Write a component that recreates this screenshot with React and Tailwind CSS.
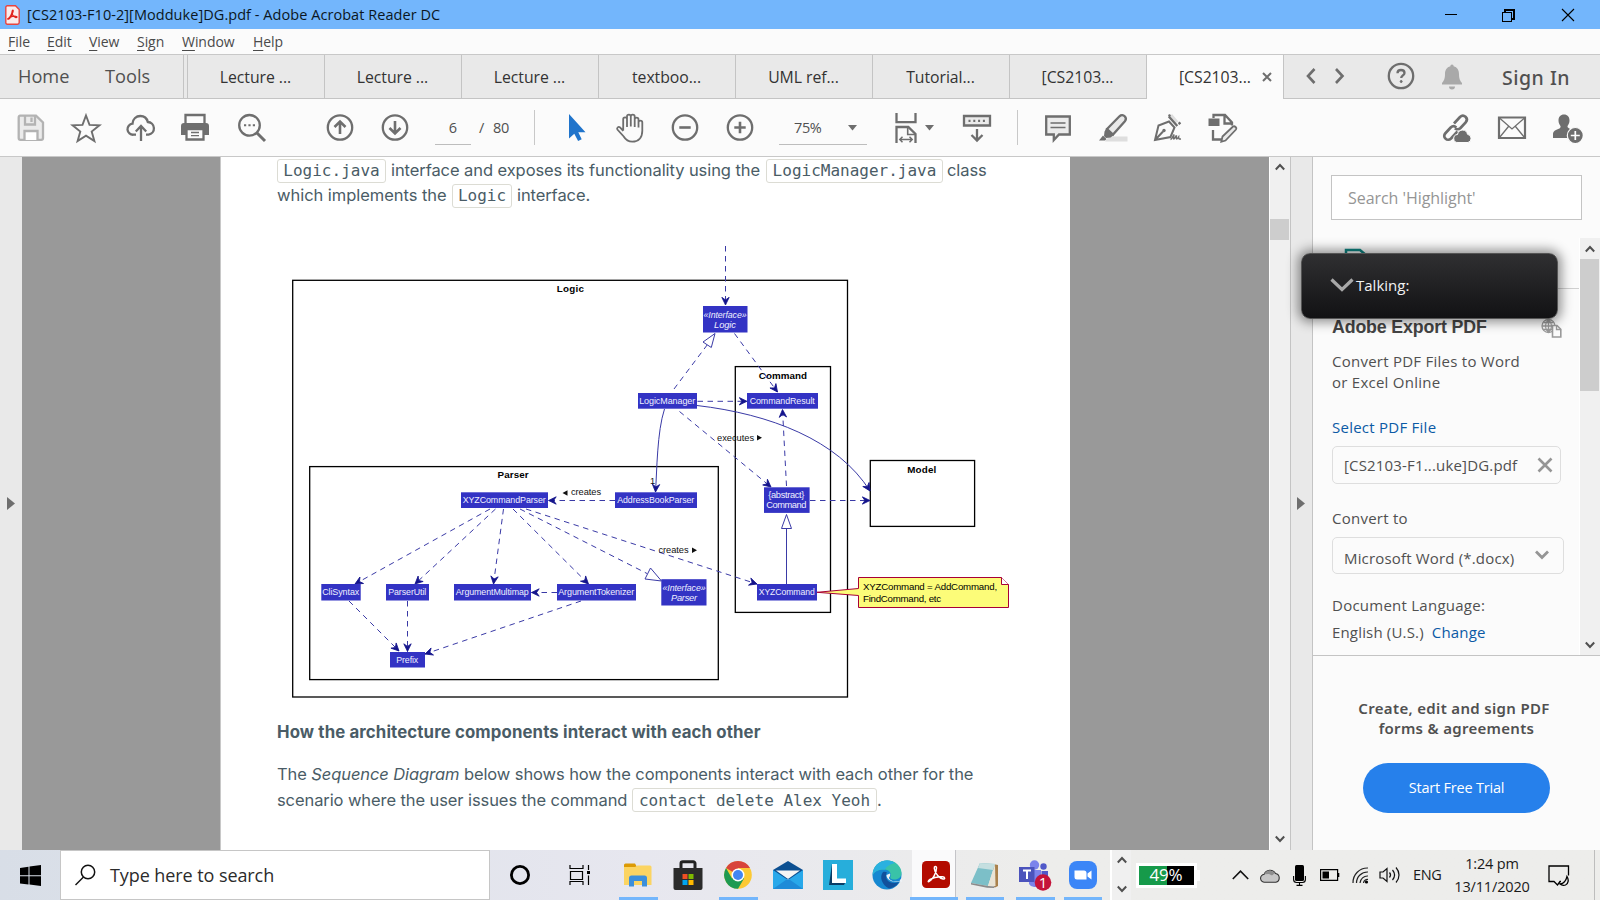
import React from "react";

const UI = "font-['Open_Sans','Noto_Sans',sans-serif]";

function Ic({ children, className = "", s = 32 }) {
  return (
    <svg width={s} height={s} viewBox={`0 0 ${s} ${s}`} fill="none" stroke="#6e6e6e" strokeWidth="2.3" className={`shrink-0 ${className}`}>
      {children}
    </svg>
  );
}

function Cell({ children, className = "" }) {
  return <div className={`flex h-full w-[55px] shrink-0 items-center justify-center ${className}`}>{children}</div>;
}

function TitleBar() {
  return (
    <header className="flex h-[29px] shrink-0 items-center bg-[#73b6fc] pl-[5px]">
      <svg width="15" height="20" viewBox="0 0 15 20" className="shrink-0">
        <path d="M2 .8h8.500l3.700 3.700V17.500a1.700 1.700 0 0 1-1.700 1.700H2.300A1.500 1.500 0 0 1 .8 17.700V2.300A1.500 1.500 0 0 1 2.300.8z" fill="#fbeceb" stroke="#e8443f" strokeWidth="1.400" />
        <path d="M3 13.500c2-.6 4-4.500 4.200-7.500.1-1.400 1.300-1.100 1 .2C7.800 8.500 5 13.800 3.600 14.200c-.9.2-1.200-.4-.6-.7zM3.500 13.300c2-1.600 6-2.600 8-1.800 1.200.6.200 1.400-1 .9C8.800 11.800 7 9.500 7 6.500" fill="none" stroke="#e0221c" strokeWidth="1.200" />
      </svg>
      <span className="ml-[7px] text-[14.500px] tracking-[0.05px] text-[#0b1622]">[CS2103-F10-2][Modduke]DG.pdf - Adobe Acrobat Reader DC</span>
      <svg width="140" height="20" viewBox="0 0 140 20" className="ml-auto mr-[19px]" fill="none" stroke="#000" strokeWidth="1.100" shapeRendering="crispEdges">
        <path d="M4 9.500h12M61.500 7.500h9v9h-9zM64 7V5h9v9h-2" />
        <path d="M121 4l12 12M133 4l-12 12" shapeRendering="auto" />
      </svg>
    </header>
  );
}

function MenuBar() {
  const items = [
    ["F", "ile", "w-[39px]"],
    ["E", "dit", "w-[42px]"],
    ["V", "iew", "w-[48px]"],
    ["S", "ign", "w-[45px]"],
    ["W", "indow", "w-[71px]"],
    ["H", "elp", "w-[60px]"],
  ];
  return (
    <nav className="flex h-[26px] shrink-0 items-center border-b border-[#c8c8c8] bg-[#fbfbfb] pl-[8px] text-[14px] tracking-[-0.05px] text-[#4a4a4a]">
      {items.map(([a, b, w]) => (
        <span key={a} className={w}>
          <span className="underline decoration-1 underline-offset-[3px]">{a}</span>
          {b}
        </span>
      ))}
    </nav>
  );
}

function TabBar() {
  const tabs = ["Lecture ...", "Lecture ...", "Lecture ...", "textboo...", "UML ref...", "Tutorial...", "[CS2103..."];
  return (
    <div className="flex h-[44px] shrink-0 bg-[#e9e9e9] text-[#333]">
      <div className="flex w-[184px] items-center border-r border-b border-[#c4c4c4] pl-[18px] text-[18.200px] text-[#505050]">
        <span className="w-[87px]">Home</span>
        <span>Tools</span>
      </div>
      <div className="w-[4px] border-r border-b border-[#c4c4c4]" />
      {tabs.map((t, i) => (
        <div key={i} className="flex w-[137px] items-center justify-center border-r border-b border-[#c4c4c4] pr-[1px] pt-[2px] text-[15.800px] tracking-[-0.05px]">
          {t}
        </div>
      ))}
      <div className="flex w-[137px] items-center border-r border-[#c4c4c4] bg-[#fbfbfb] pl-[32px] pt-[1px] text-[15.800px] tracking-[-0.05px]">
        <span className="w-[83px] pt-[1px]">[CS2103...</span>
        <svg width="10" height="10" viewBox="0 0 10 10" className="-mt-[2px]" stroke="#6e6e6e" strokeWidth="2"><path d="M1 1l8 8M9 1l-8 8" /></svg>
      </div>
      <div className="flex flex-1 items-center border-b border-[#c4c4c4]">
        <svg width="40" height="18" viewBox="0 0 40 18" className="-mt-[1px] ml-[21px]" fill="none" stroke="#6e6e6e" strokeWidth="2.600">
          <path d="M9.500 2L3 9l6.500 7M31 2l6.500 7-6.500 7" />
        </svg>
        <Ic className="-mt-[1px] ml-[40px]">
          <circle cx="16" cy="16" r="12.200" />
          <path d="M12.500 13.200c0-2 1.500-3.200 3.500-3.200s3.500 1.200 3.500 3c0 2.300-3.300 2.500-3.300 5" />
          <circle cx="16.200" cy="21.500" r="1" fill="#6e6e6e" strokeWidth="1" />
        </Ic>
        <Ic className="ml-[19px]">
          <path d="M16 3.500c1.200 0 1.500.8 1.600 1.800 3.800 1 5.400 4 5.400 7.700 0 5 1.300 7 3 9v1.500H6V22c1.700-2 3-4 3-9 0-3.700 1.600-6.700 5.400-7.700.1-1 .4-1.800 1.600-1.800zM13 25.500h6a3 3 0 0 1-6 0z" fill="#a9a9a9" stroke="none" />
        </Ic>
        <span className="ml-[34px] pt-[3px] font-['Noto_Sans'] text-[19.500px] font-medium tracking-[0.5px] text-[#505050]">Sign In</span>
      </div>
    </div>
  );
}

function Toolbar() {
  return (
    <div className="flex h-[58px] shrink-0 items-center border-b border-[#c8c8c8] bg-[#fbfbfb] pl-[3px] text-[14.500px] text-[#505050]">
      <Cell>
        <Ic>
          <path d="M4.500 3.700H21L28 10.500V26a1.800 1.800 0 0 1-1.800 1.800H5.500A1.800 1.800 0 0 1 3.700 26V5.500a1.800 1.800 0 0 1 1.800-1.800z" fill="#ebebeb" stroke="#b3b3b3" />
          <path d="M10 4v8.500h10V4M16.500 5.500v4.500" stroke="#b3b3b3" />
          <path d="M9.500 28v-9h13v9" fill="#fff" stroke="#b3b3b3" />
        </Ic>
      </Cell>
      <Cell>
        <Ic>
          <path d="M16 3.500l3.500 9.400 10 .4-7.800 6.200 2.700 9.600L16 23.600l-8.400 5.500 2.700-9.600-7.800-6.200 10-.4z" strokeWidth="1.900" />
        </Ic>
      </Cell>
      <Cell>
        <Ic>
          <path d="M11 22.700H8.500a5.500 5.500 0 0 1-1-11C7.800 6.800 11.300 4 15.300 4c3.700 0 6.600 2.200 7.500 6a6.400 6.400 0 0 1 .8 12.700H21" />
          <path d="M16 29V15M10.800 19.500L16 14l5.200 5.500" />
        </Ic>
      </Cell>
      <Cell className="pr-[2px]">
        <Ic>
          <path d="M6.500 11V3h19v8" />
          <path d="M2 14a3 3 0 0 1 3-3h22a3 3 0 0 1 3 3v9h-5v-5H7v5H2z" fill="#6e6e6e" stroke="none" />
          <path d="M7.500 17h17v10.500h-17z" fill="#fbfbfb" />
          <path d="M12 20.500h8M12 23.700h8" strokeWidth="1.300" />
        </Ic>
      </Cell>
      <Cell className="pl-[2px]">
        <Ic>
          <circle cx="13.500" cy="13.300" r="10.300" />
          <path d="M21 21l8 8" strokeWidth="3" />
          <path d="M8 13.300h2.200M12.400 13.300h2.200M16.800 13.300h2.200" strokeWidth="2" />
        </Ic>
      </Cell>
      <div className="w-[34px] shrink-0" />
      <Cell>
        <Ic><circle cx="16" cy="15.500" r="12.200" /><path d="M16 22V9.500M10.500 15l5.500-5.500 5.500 5.500" strokeWidth="2.600" /></Ic>
      </Cell>
      <Cell>
        <Ic><circle cx="16" cy="15.500" r="12.200" /><path d="M16 9v12.500M10.500 16l5.500 5.500 5.500-5.500" strokeWidth="2.600" /></Ic>
      </Cell>
      <div className="ml-[13px] h-[34px] w-[36px] shrink-0 border-b border-[#bdbdbd] pt-[6px] text-center">6</div>
      <div className="ml-[8px] w-[14px] shrink-0">/</div>
      <div className="w-[41px] shrink-0 tracking-[-0.3px]">80</div>
      <div className="h-[35px] w-px shrink-0 bg-[#c8c8c8]" />
      <div className="w-[14px] shrink-0" />
      <Cell>
        <Ic><path d="M8 2v24.500l5.300-4.700 3.800 7.200 3.600-1.800-3.400-7H24.500z" fill="#2074cb" stroke="none" /></Ic>
      </Cell>
      <Cell className="pr-[3px]">
        <Ic>
          <path d="M9.200 18.500V7.200a1.900 1.900 0 0 1 3.800 0V15M13 14.500V4.600a1.900 1.900 0 0 1 3.800 0V14.500M16.800 14.500V4.600a1.900 1.900 0 0 1 3.900 0V15M20.700 9V7.500a1.900 1.900 0 0 1 3.800 0V15.500M24.500 10.500a1.900 1.900 0 0 1 3.800 0v8.200c0 7-4 11-10 11-4.500 0-6.500-1.700-8.600-5.200L3.400 17.600c-1-1.900 1-3.400 2.700-2.200l3.100 3.600" strokeWidth="1.800" />
        </Ic>
      </Cell>
      <Cell className="pr-[3px]">
        <Ic><circle cx="16" cy="15.500" r="12.200" /><path d="M10.300 15.500h11.400" strokeWidth="2.600" /></Ic>
      </Cell>
      <Cell className="pr-[3px]">
        <Ic><circle cx="16" cy="15.500" r="12.200" /><path d="M10.300 15.500h11.400M16 9.800v11.400" strokeWidth="2.600" /></Ic>
      </Cell>
      <div className="ml-[10px] flex h-[34px] w-[88px] shrink-0 items-center border-b border-[#bdbdbd] pl-[15px]">
        <span className="w-[54px] pt-[1px] tracking-[-0.4px]">75%</span>
        <svg width="9" height="6" viewBox="0 0 9 6" className="mt-[1px]"><path d="M0 0h9L4.500 5.500z" fill="#6e6e6e" /></svg>
      </div>
      <Ic className="ml-[23px]">
        <path d="M6.500 1v9.200h19V1" /><path d="M6.500 31V15h11.800l7.200 7v9" /><path d="M17.700 15v7.500h7.500" strokeWidth="1.600" />
        <path d="M10 27.500h12M12.500 24.800l-2.700 2.700 2.700 2.700M19.500 24.800l2.700 2.700-2.700 2.700" strokeWidth="1.500" />
      </Ic>
      <svg width="9" height="6" viewBox="0 0 9 6" className="ml-[3px] shrink-0"><path d="M0 0h9L4.500 5.500z" fill="#6e6e6e" /></svg>
      <div className="w-[15px] shrink-0" />
      <Cell>
        <Ic><path d="M3 4h26v9.500H3z" fill="#ebebeb" /><path d="M7.500 8.800h2M12.300 8.800h2M17.100 8.800h2M21.900 8.800h2M16 17v11M10.500 23l5.500 5.500 5.500-5.500" /></Ic>
      </Cell>
      <div className="ml-[13px] h-[35px] w-px shrink-0 bg-[#c8c8c8]" />
      <div className="w-[12px] shrink-0" />
      <Cell>
        <Ic><path d="M4.200 4.500h23.600v18H17l-5.200 5.500v-5.500H4.200z" fill="#ebebeb" /><path d="M8.500 11h15M8.500 15.500h15" strokeWidth="1.300" /></Ic>
      </Cell>
      <Cell>
        <Ic>
          <path d="M12 24.500h18.500v5H8z" fill="#dedede" stroke="none" />
          <path d="M10 17L22.500 4.300c1.700-1.600 4-1.200 5.200 0 1.300 1.300 1.500 3.300.2 4.900L16 22.500z" fill="#e9e9e9" />
          <path d="M9.500 16l7.500 7-3.500 2.500-4.500.5-2-2 .5-4.500zM6 23.500l3.500 3.500-1.500 1.500H2z" fill="#6e6e6e" stroke="none" />
        </Ic>
      </Cell>
      <Cell>
        <Ic>
          <path d="M17.500 5l2.500-3 6.500 7.500-3.500 2z" fill="#dedede" stroke="none" />
          <path d="M17 4.500l1-2M26.500 12l2-1.500M16.800 4.500l8.500 9.500" strokeWidth="2.300" />
          <path d="M3 28l3.500-14.500 10.500-4 5.500 6-4 9.500zM3.500 27.500l7.500-8" strokeWidth="2" /><circle cx="12" cy="18.500" r="1.700" fill="#6e6e6e" stroke="none" />
          <path d="M18.500 27.500c1.500-.5 2.500-3 3.500-5-.5 3-.5 4.500 0 4.500s1.500-2 2.500-3.500c-.3 2-.2 3.500.3 3.500s1-1 1.800-2c0 1.500.3 2.300 2.400 2" strokeWidth="1.500" />
        </Ic>
      </Cell>
      <Cell>
        <Ic>
          <path d="M1.500 6.500h11V14h-11z" fill="#6e6e6e" stroke="none" />
          <path d="M6.500 6V3h11.500l7 7.500v3M6 18v9.500h9M17.500 3v8.500H25" />
          <path d="M15.500 24.500L26 14.500c1.700-1 4.300 1.300 3 3L18.500 28.500l-4.200 1.300z" fill="#e9e9e9" strokeWidth="1.800" />
        </Ic>
      </Cell>
      <div className="ml-auto" />
      <Cell className="pr-[1px]">
        <Ic>
          <path d="M14 11.500l6-6.500c1.800-1.700 4-1.500 5.500-.2 1.600 1.500 1.700 3.800.2 5.500l-5.200 5.700c-1.600 1.600-4 1.700-5.600.2M17.500 19.500l-6.500 7c-1.600 1.600-4 1.600-5.500.1-1.600-1.500-1.700-3.700-.1-5.400l5.300-5.700c1.700-1.700 4-1.600 5.600-.1" strokeWidth="2.700" />
          <path d="M18 30.500a4 4 0 0 1-.5-8c.5-3 2.700-4.500 5.300-4.400 2.500 0 4.200 1.500 4.700 4.200a4.200 4.200 0 0 1 .5 8.200z" fill="#6e6e6e" stroke="#fbfbfb" strokeWidth="1" />
        </Ic>
      </Cell>
      <Cell>
        <Ic><path d="M3 5.500h26v20.500H3z" strokeWidth="2.200" /><path d="M3.500 6l12.500 11L28.500 6M3.500 25.500l9-11M28.500 25.500l-9-11" strokeWidth="1.300" /></Ic>
      </Cell>
      <Cell>
        <Ic>
          <path d="M13 2.500c3.500 0 5.500 2.500 5.500 6 0 2.500-1 4-1.800 5.200-.6 1 0 2 1.500 2.700 3 1.300 5 2 5 5V26H2v-3.500c0-3.500 2.500-4.500 5.800-5.800 1.800-.7 2.200-2 1.500-3-.8-1.200-1.800-2.700-1.800-5.200 0-3.500 2-6 5.500-6z" fill="#6e6e6e" stroke="none" />
          <circle cx="24.300" cy="23.500" r="8" fill="#6e6e6e" stroke="#fbfbfb" strokeWidth="1.200" /><path d="M19.800 23.500h9M24.300 19v9" stroke="#fff" strokeWidth="1.700" />
        </Ic>
      </Cell>
      <div className="w-[6px] shrink-0" />
    </div>
  );
}

const BOXES = [
  [292.7, 280.3, 847.5, 697],
  [309.7, 466.6, 718.3, 679.6],
  [735.3, 366.6, 830.5, 612.4],
  [870.3, 460.5, 974.6, 526.4],
];
const TITLES = [
  ["Logic", 570.3, 292, 27],
  ["Parser", 513, 478, 31],
  ["Command", 782.8, 378.7, 48],
  ["Model", 921.7, 472.6, 29],
];
const NODES = [
  [638, 393, 697, 408.7, ["LogicManager"], 56],
  [747, 393, 818, 408.7, ["CommandResult"], 65],
  [461, 492.3, 548, 508, ["XYZCommandParser"], 83],
  [615, 492.3, 697, 508, ["AddressBookParser"], 77],
  [321.3, 584, 360.7, 600.5, ["CliSyntax"], 37],
  [386, 584, 429, 600.5, ["ParserUtil"], 38],
  [454, 584, 531, 600.5, ["ArgumentMultimap"], 73],
  [557, 584, 636, 600.5, ["ArgumentTokenizer"], 76],
  [757, 584, 817, 600.5, ["XYZCommand"], 56],
  [390, 652, 425, 667.5, ["Prefix"], 22],
];
const DASHED = [
  "M725.5 246V305", "M734.5 333.5L777.5 392", "M697.5 401.3H747", "M679.5 411.5L771 487",
  "M786.5 486L782.5 409.5", "M810 500.5H870", "M615 500.5H548.5", "M490 509L355 584", "M495.5 509L415 584",
  "M503.5 509L493.5 584", "M513 509L588.5 584", "M526 509L757 584", "M557 592.5H531.5",
  "M349 601L399 651", "M407.5 601V651.5", "M581 601L425 654",
];

function ClassDiagram() {
  return (
    <svg width="740" height="470" viewBox="280 240 740 470" className="ml-[59px] mt-[32px] block font-['Liberation_Sans',Arial,sans-serif] text-[9px]">
      <defs>
        <marker id="tip" markerUnits="userSpaceOnUse" markerWidth="12" markerHeight="12" refX="8.500" refY="5" orient="auto">
          <path d="M8.500 5L.8 1.300 3.400 5 .8 8.700z" fill="#14148c" stroke="#14148c" strokeWidth=".8" />
        </marker>
      </defs>
      <g fill="none" stroke="#000" strokeWidth="1.300">
        {BOXES.map(([a, b, c, d]) => <rect key={a} x={a} y={b} width={c - a} height={d - b} />)}
      </g>
      <g fontWeight="bold" fontSize="9.800" textAnchor="middle" fill="#000">
        {TITLES.map(([t, x, y, w]) => <text key={t} x={x} y={y} textLength={w}>{t}</text>)}
      </g>
      <g fill="none" stroke="#3a3aa6" strokeWidth="1">
        {DASHED.map((d) => <path key={d} d={d} strokeDasharray="5.500 4.500" markerEnd="url(#tip)" />)}
        <path d="M674 389L707.500 344.500M520 509L647 573.500" strokeDasharray="5.500 4.500" />
        <path d="M697 405.500C770 414 838 440 870 491" markerEnd="url(#tip)" />
        <path d="M664.500 409C657 432 657 470 655.500 492" markerEnd="url(#tip)" />
        <path d="M786.500 584V529" />
        <path d="M786.500 514.500l-5 14h10zM715 333.500l-12 8.500 8.300 5.500zM661.500 581l-16.500-2 5.500-11z" fill="#fff" />
      </g>
      <g>
        {NODES.map(([a, b, c, d, t, w]) => (
          <g key={t[0]}>
            <rect x={a} y={b} width={c - a} height={d - b} fill="#3333c4" />
            <text x={(a + c) / 2 - 0.3} y={(b + d) / 2 + 3.1} textLength={w} lengthAdjust="spacingAndGlyphs" textAnchor="middle" fontSize="9.300" fill="#f0f0ff">{t[0]}</text>
          </g>
        ))}
        <g fill="#3333c4">
          <rect x="703" y="306" width="44.500" height="26.500" />
          <rect x="764" y="487.300" width="45.600" height="25.600" />
          <rect x="661.300" y="579.200" width="45.200" height="26.300" />
        </g>
        <g fill="#f0f0ff" textAnchor="middle" fontSize="9.300">
          <g fontStyle="italic">
            <text x="725" y="317.500" textLength="43" lengthAdjust="spacingAndGlyphs">«Interface»</text>
            <text x="725" y="327.500">Logic</text>
            <text x="684" y="591" textLength="43" lengthAdjust="spacingAndGlyphs">«Interface»</text>
            <text x="684" y="600.700" textLength="26">Parser</text>
          </g>
          <text x="786.300" y="498" textLength="36">{"{abstract}"}</text>
          <text x="786.300" y="508" textLength="40">Command</text>
        </g>
      </g>
      <g fill="#111" fontSize="9.300">
        <text x="717" y="440.700" textLength="37">executes</text>
        <text x="571" y="495.300" textLength="30">creates</text>
        <text x="658.500" y="553" textLength="30">creates</text>
        <text x="650" y="484">1</text>
        <path d="M757 435l5 2.700-5 2.700zM692 547.600l5 2.700-5 2.700zM567.500 490.300l-5 2.700 5 2.700z" />
      </g>
      <path d="M858.500 577.500H1001.500L1008.500 584.500V607.500H858.500V595.500L817 592.300 858.500 588.500z" fill="#fcfc79" stroke="#a80036" />
      <path d="M1001.500 577.500V584.500H1008.500" fill="#fff" stroke="#a80036" />
      <g fill="#000" fontSize="9.700">
        <text x="863" y="590.300" textLength="134">XYZCommand = AddCommand,</text>
        <text x="863" y="602.300" textLength="78">FindCommand, etc</text>
      </g>
    </svg>
  );
}

function Code({ children, className }) {
  return (
    <span className={`flex h-[24px] shrink-0 items-center justify-center rounded-[3px] border border-[#dcdcd4] font-['DejaVu_Sans_Mono',monospace] text-[16px] tracking-normal ${className}`}>
      {children}
    </span>
  );
}

function DocPage() {
  return (
    <main className="h-full w-[850px] shrink-0 overflow-hidden border-l border-[#c8c8c8] bg-white font-['Inter',sans-serif] text-[16.500px] leading-[25px] tracking-[-0.09px] text-[#4a5c66]">
      <div className="mt-[1px] flex h-[25px] items-center whitespace-nowrap pl-[56px]">
        <Code className="w-[109px]">Logic.java</Code>
        <span className="ml-[5px] w-[375px] tracking-[-0.08px]">interface and exposes its functionality using the</span>
        <Code className="w-[177px]">LogicManager.java</Code>
        <span className="ml-[4px]">class</span>
      </div>
      <div className="flex h-[25px] items-center whitespace-nowrap pl-[56px]">
        <span className="w-[175px] tracking-[-0.04px]">which implements the</span>
        <Code className="w-[60px]">Logic</Code>
        <span className="ml-[5px]">interface.</span>
      </div>
      <ClassDiagram />
      <h3 className="mt-[9px] whitespace-nowrap pl-[56px] text-[16.800px] font-bold leading-[26px] tracking-[0.125px]">How the architecture components interact with each other</h3>
      <p className="mt-[16px] whitespace-nowrap pl-[56px] leading-[26px]">
        The <em>Sequence Diagram</em> below shows how the components interact with each other for the
      </p>
      <div className="flex h-[26px] items-center whitespace-nowrap pl-[56px]">
        <span className="w-[355px]">scenario where the user issues the command</span>
        <Code className="w-[245px]">contact delete Alex Yeoh</Code>
        <span>.</span>
      </div>
    </main>
  );
}

function Chev({ down, w = 10 }) {
  return (
    <svg width={w} height="8" viewBox="0 0 10 8" fill="none" stroke="#505050" strokeWidth="2">
      <path d={down ? "M.8 1.5L5 6l4.200-4.500" : "M.8 6.500L5 2l4.200 4.500"} />
    </svg>
  );
}

function SidePanel() {
  return (
    <aside className="relative flex h-full flex-1 flex-col border-l border-[#c4c4c4] bg-[#fbfbfb] text-[15px] text-[#505050]">
      <div className="h-[81px] shrink-0 pl-[18px] pt-[18px]">
        <div className="flex h-[45px] w-[251px] items-center border border-[#c4c4c4] bg-white pl-[16px] text-[16px] tracking-[-0.05px] text-[#959595]">Search 'Highlight'</div>
      </div>
      <div className="flex h-[417px] shrink-0">
        <div className="flex w-[266px] flex-col whitespace-nowrap pl-[19px] tracking-[0.25px]">
          <svg width="24" height="24" viewBox="0 0 24 24" className="ml-[12px] mt-[9px] shrink-0" fill="none" stroke="#0f8583" strokeWidth="2.500"><path d="M2 23V3h14l6 5v15" /></svg>
          <div className="-ml-[19px] mt-[17px] h-px shrink-0 bg-[#d0d0d0]" />
          <div className="mt-[26px] flex h-[25px] shrink-0 items-center">
            <span className="w-[209px] font-['Liberation_Sans',Arial] text-[17.800px] font-bold tracking-[-0.15px] text-[#444]">Adobe Export PDF</span>
            <svg width="21" height="20" viewBox="0 0 21 20" fill="none" stroke="#9a9a9a" strokeWidth="1.300">
              <circle cx="7.500" cy="8" r="6.500" /><path d="M1 8h13M7.500 1.500v13M2.500 4.500h10M2.500 11.500h10M7.500 1.500c-4 4-4 9 0 13M7.500 1.500c4 4 4 9 0 13" />
              <path d="M11.500 7.500h4.500l3.800 3.800V19h-8.300z" fill="#fbfbfb" strokeWidth="1.600" /><path d="M15.500 7.500v4h4" />
            </svg>
          </div>
          <div className="mt-[11px] leading-[21px]">Convert PDF Files to Word<br />or Excel Online</div>
          <div className="mt-[24px] leading-[21px] text-[#0b5aa5]">Select PDF File</div>
          <div className="mt-[8px] flex h-[38px] w-[229px] shrink-0 items-center rounded-[5px] border border-[#dedede] pl-[11px]">
            <span className="w-[193px] tracking-[0.17px]">[CS2103-F1...uke]DG.pdf</span>
            <svg width="16" height="16" viewBox="0 0 16 16" stroke="#959595" strokeWidth="2.600"><path d="M1.500 1.500l13 13M14.500 1.500l-13 13" /></svg>
          </div>
          <div className="mt-[24px] leading-[21px]">Convert to</div>
          <div className="mt-[8px] flex h-[37px] w-[232px] shrink-0 items-center rounded-[5px] border border-[#dedede] pl-[11px]">
            <span className="w-[191px] pt-[5px] tracking-[0.17px]">Microsoft Word (*.docx)</span>
            <svg width="14" height="10" viewBox="0 0 14 10" className="-mt-[2px]" fill="none" stroke="#959595" strokeWidth="2.800"><path d="M1 1.500l6 6 6-6" /></svg>
          </div>
          <div className="mt-[21px] leading-[21px]">Document Language:</div>
          <div className="mt-[6px] leading-[21px] tracking-[0.17px]">English (U.S.)<span className="ml-[8px] text-[#0b5aa5]">Change</span></div>
        </div>
        <div className="flex w-[21px] flex-col items-center border-l border-white bg-[#f0f0f0] pr-[1px]">
          <div className="flex h-[21px] items-center"><Chev /></div>
          <div className="h-[132px] w-[19px] bg-[#cdcdcd]" />
          <div className="mb-[6px] mt-auto"><Chev down /></div>
        </div>
      </div>
      <div className="flex flex-1 flex-col items-center border-t border-[#c4c4c4] pt-[42px] font-['Noto_Sans'] text-[15px] font-semibold leading-[20px]">
        <div className="pr-[5px] tracking-[0.33px]">Create, edit and sign PDF</div>
        <div className="tracking-[0.3px]">forms &amp; agreements</div>
        <div className="mt-[25px] flex h-[50px] w-[187px] items-center justify-center rounded-full bg-[#2680eb] font-['Open_Sans'] text-[14.500px] font-normal tracking-[-0.2px] text-white">Start Free Trial</div>
      </div>
      <div className="absolute -left-[12px] top-[96px] flex h-[66px] w-[257px] items-center rounded-[9px] border border-[#555] bg-linear-to-b from-[#303032] to-[#121214] pb-[2px] pl-[28px] text-[15px] text-[#f2f2f2] shadow-[0_0_12px_3px_rgba(0,0,0,0.45)]">
        <svg width="24" height="14" viewBox="0 0 24 14" fill="none" stroke="#a8a8a8" strokeWidth="3.200"><path d="M1.500 1.500L12 11.500l10.500-10" /></svg>
        <span className="ml-[2px]">Talking:</span>
      </div>
    </aside>
  );
}

function Task({ children, bar = "" }) {
  return (
    <div className="flex h-full w-[50px] shrink-0 flex-col items-center">
      <div className="flex h-[47px] shrink-0 items-center justify-center pt-[3px]">{children}</div>
      <div className={`h-[3px] ${bar}`} />
    </div>
  );
}

function Taskbar() {
  return (
    <footer className="flex h-[50px] shrink-0 items-center bg-linear-to-r from-[#d8dee7] via-[#e7e7ef] via-40% to-[#ededeb] to-65% text-[#1a1a1a]">
      <div className="flex w-[60px] shrink-0 items-center pl-[20px]">
        <svg width="21" height="21" viewBox="0 0 21 21"><path d="M0 3l8.500-1.200v8.400H0zM9.500 1.600L21 0v10.200H9.500zM0 11.200h8.500v8.400L0 18.400zM9.500 11.200H21V21L9.500 19.600z" fill="#000" /></svg>
      </div>
      <div className="flex h-full w-[430px] shrink-0 items-center border border-[#c6c6c6] bg-white pl-[13px]">
        <svg width="22" height="22" viewBox="0 0 22 22" fill="none" stroke="#111" strokeWidth="1.500"><circle cx="14" cy="8" r="6.700" /><path d="M9.500 13L1.500 21" /></svg>
        <span className="ml-[14px] text-[18px] tracking-[-0.08px] text-[#2b2b2b]">Type here to search</span>
      </div>
      <svg width="22" height="22" viewBox="0 0 22 22" className="ml-[19px] shrink-0"><circle cx="11" cy="11" r="8.600" fill="none" stroke="#000" strokeWidth="2.800" /></svg>
      <svg width="22" height="20" viewBox="0 0 22 20" className="ml-[38px] shrink-0" fill="none" stroke="#000" strokeWidth="1.200"><path d="M1 0v3.500h13V0M1.500 6.500h12v8h-12zM1 20v-3.500h13V20M19.500 0v5M19.500 10.500V20" /><path d="M18 6h3v3h-3z" fill="#000" stroke="none" /></svg>
      <div className="w-[22px] shrink-0" />
      <Task bar="w-[39px] bg-[#73b6fc]">
        <svg width="28" height="26" viewBox="0 0 28 26"><path d="M0 3a1.500 1.500 0 0 1 1.500-1.500h9.500l2 3.500H0z" fill="#dc9a05" /><path d="M0 5h11l2.500-1.500H26a1.500 1.500 0 0 1 1.500 1.500v18H0z" fill="#fbd462" /><path d="M5 24.500V16a2.500 2.500 0 0 1 2.500-2.500h13A2.500 2.500 0 0 1 23 16v8.500h-5V19h-8v5.500z" fill="#3c8fdb" /></svg>
      </Task>
      <Task>
        <svg width="30" height="30" viewBox="0 0 30 30"><path d="M8 9V3.500A1.800 1.800 0 0 1 9.800 1.700h10.400A1.800 1.800 0 0 1 22 3.500V9" fill="none" stroke="#222" strokeWidth="3" /><path d="M.5 8h29v20a2 2 0 0 1-2 2h-25a2 2 0 0 1-2-2z" fill="#2b2b2b" /><path d="M9.500 14h5v5h-5z" fill="#f04f23" /><path d="M15.500 14h5v5h-5z" fill="#7fba00" /><path d="M9.500 20h5v5h-5z" fill="#00a4ef" /><path d="M15.500 20h5v5h-5z" fill="#ffb900" /></svg>
      </Task>
      <Task bar="w-[39px] bg-[#73b6fc]">
        <svg width="28" height="28" viewBox="0 0 28 28"><circle cx="14" cy="14" r="13.800" fill="#fcc934" /><path d="M14 14L2 7.100A13.800 13.800 0 0 1 26 7.100H14z" fill="#d8453b" /><path d="M2 7.100A13.800 13.800 0 0 0 14 27.800L20 17.500 14 14 8 17.500z" fill="#1e9a52" /><circle cx="14" cy="14" r="6.500" fill="#fff" /><circle cx="14" cy="14" r="5" fill="#4286f3" /></svg>
      </Task>
      <Task>
        <svg width="30" height="28" viewBox="0 0 30 28"><path d="M0 9L15 0l15 9v9H0z" fill="#0c4f91" /><path d="M3 9.500h24L15 18z" fill="#f5f5f5" /><path d="M0 9l15 10L30 9v19H0z" fill="#28a8ea" /><path d="M0 28L15 17.500 30 28z" fill="#1a7fd0" opacity=".7" /></svg>
      </Task>
      <Task>
        <div className="flex h-[30px] w-[30px] justify-center bg-[#27aedb]">
          <svg width="30" height="30" viewBox="0 0 30 30"><path d="M9 4L6 25h15l2-4H10z" fill="#0a3d66" /><path d="M9 4h5v14.500h9V23H9z" fill="#fff" /></svg>
        </div>
      </Task>
      <Task>
        <svg width="30" height="30" viewBox="0 0 30 30" className="-ml-[2px]"><circle cx="15" cy="15" r="14.500" fill="#1688d1" /><path d="M1 12C3 4 9 .5 15 .5 24 .5 29.500 7 29.500 13c0 4-3 6.500-7 6.500-3 0-5-1-4-3 1-3-1-7-6-7C7 9.500 2.500 11 1 15z" fill="#39c3a8" /><path d="M1 12C3 4 9 .5 15 .5c3 0 6 1 8 2.500-5 1-9 4-10 6.500C7 9 2.500 11 .6 15z" fill="#2ab1e0" /><path d="M11 12c-4 5-1 13 6 16.500 4-.5 8-3 10-6.500-6 2.500-13 0-13-6 0-2 .5-3 1-3.500-1-.8-3-1-4-.5z" fill="#11519c" /><path d="M14.500 15c0 5 6 8 13 6l2-3 .5 4-5-1c-4 1-8-1-8-3.500 1-1 1.500-2.500 1-4z" fill="#eef2f6" /></svg>
      </Task>
      <div className="ml-[-1px] flex h-full w-[44px] shrink-0 flex-col items-center border-r border-[#c4c4c8] bg-[#fafafb]">
        <div className="flex h-[47px] shrink-0 items-center pl-[4px] pt-[1px]">
          <svg width="28" height="27" viewBox="0 0 28 27"><rect width="28" height="27" rx="4.500" fill="#b30b00" /><path d="M7 20.500c3-1 7.500-8 7.500-13.500 0-2.200-2.500-2-2.200.5.500 5 5.500 10 8.700 10.500 2.500.2 2-2-.5-2.200-4-.4-9 .6-12.500 2.600-2.300 1.500-2 3-1 2.100z" fill="none" stroke="#fff" strokeWidth="1.500" /></svg>
        </div>
        <div className="h-[3px] w-[48px] bg-[#73b6fc]" />
      </div>
      <div className="w-[4px] shrink-0" />
      <Task bar="w-[38px] bg-[#73b6fc]">
        <svg width="28" height="26" viewBox="0 0 28 26"><path d="M22 2l5 1v21l-3 1.500-2-2z" fill="#a9814c" /><path d="M9 1l15 1-7 22L0 21z" fill="#7cbfc8" /><path d="M9 1l15 1-2 6L7 6z" fill="#c5dfe0" /><path d="M24 2l.5 22H17z" fill="#e9e4d6" /><path d="M0 21l17 3 7 .5-1 1.500-7-.3L0 22.500z" fill="#8b8b8b" /></svg>
      </Task>
      <Task bar="w-[39px] bg-[#73b6fc]">
        <svg width="33" height="31" viewBox="0 0 33 31"><circle cx="15.500" cy="5" r="4.700" fill="#7b83eb" /><circle cx="24.500" cy="6.500" r="3.200" fill="#5059c9" /><path d="M10 10h12v11a6.500 6.500 0 0 1-12 3z" fill="#7b83eb" /><path d="M22.500 11H29v8h-6.500z" fill="#5059c9" /><path d="M0 7h15.500v15H0z" fill="#4b53bc" /><path d="M4 10.500h8M8 10.500V19" stroke="#fff" strokeWidth="2" fill="none" /><circle cx="24" cy="22.500" r="8.300" fill="#c4143a" /><text x="24" y="28" textAnchor="middle" fontSize="15" fill="#fff">1</text></svg>
      </Task>
      <Task bar="-ml-[4px] w-[38px] bg-[#73b6fc]">
        <svg width="28" height="28" viewBox="0 0 28 28" className="-ml-[4px]"><rect width="28" height="28" rx="8" fill="#3c86f7" /><path d="M5.500 9.500h9.500a2.500 2.500 0 0 1 2.500 2.500v6.500H8A2.500 2.500 0 0 1 5.500 16zM18.500 12.500l4-3v9l-4-3z" fill="#fff" /></svg>
      </Task>
      <div className="ml-auto flex h-full w-[21px] shrink-0 flex-col items-center justify-between border-l-2 border-white bg-[#f0f0f0] pb-[7px] pt-[6px]">
        <Chev /><Chev down />
      </div>
      <div className="ml-[5px] flex h-[25px] w-[61px] shrink-0 items-center justify-center border-[3px] border-white bg-linear-to-r from-[#169a4a] from-50% to-black to-50% pr-[1px] text-[17px] tracking-[-0.2px] text-white">49%</div>
      <div className="h-[11px] w-[3px] shrink-0 bg-white" />
      <svg width="17" height="10" viewBox="0 0 17 10" className="ml-[32px] shrink-0" fill="none" stroke="#111" strokeWidth="1.600"><path d="M.8 9L8.500 1.200 16.200 9" /></svg>
      <svg width="20" height="15" viewBox="0 0 20 15" className="ml-[11px] shrink-0"><path d="M5 14.300a4 4 0 0 1-.8-8A6.200 6.200 0 0 1 15.500 5.500a4.500 4.500 0 0 1 .3 8.800z" fill="#c6c6c6" stroke="#333" strokeWidth="1.100" /><path d="M4.200 6.300A6.200 6.200 0 0 1 15 5l-3 2.500-3-1.500z" fill="#8e8e8e" /></svg>
      <svg width="13" height="21" viewBox="0 0 13 21" className="ml-[13px] shrink-0"><rect x="2" y="0" width="9" height="16" rx="1.500" fill="#000" /><path d="M.6 11v3.500a3 3 0 0 0 3 3h5.800a3 3 0 0 0 3-3V11M6.500 17.500V20.400M3.500 20.400h6" fill="none" stroke="#000" strokeWidth="1.100" /></svg>
      <svg width="20" height="12" viewBox="0 0 20 12" className="ml-[14px] shrink-0"><path d="M.6.600h17v10.800H.6z" fill="none" stroke="#000" strokeWidth="1.200" /><path d="M2.500 2.500H9v7H2.500zM18 4h1.300v4H18z" fill="#000" /></svg>
      <svg width="17" height="17" viewBox="0 0 17 17" className="ml-[12px] shrink-0" fill="none" stroke="#222" strokeWidth="1.200"><path d="M1 16A14.500 14.500 0 0 1 16 1M4.500 16A11 11 0 0 1 16 5M8 16a7.500 7.500 0 0 1 8-7M11.500 16a4 4 0 0 1 4.500-3.500" /><circle cx="14.500" cy="15" r="1.600" fill="#000" stroke="none" /></svg>
      <svg width="22" height="18" viewBox="0 0 22 18" className="ml-[10px] shrink-0" fill="none" stroke="#111" strokeWidth="1.200"><path d="M1 6h3l4-3.500v13L4 12H1zM10.500 6.500c1.300 1.500 1.300 3.500 0 5M13.500 4c2.500 3 2.500 7 0 10M17 1.500c4 4.500 4 10.500 0 15" /></svg>
      <span className="ml-[12px] w-[41px] shrink-0 text-[14.500px] tracking-[-0.4px]">ENG</span>
      <div className="flex w-[76px] shrink-0 flex-col items-center whitespace-nowrap text-[14.500px] leading-[23px] tracking-[-0.15px]">
        <span>1:24 pm</span><span>13/11/2020</span>
      </div>
      <svg width="22" height="21" viewBox="0 0 22 21" className="ml-[18px] mr-[24px] shrink-0" fill="none" stroke="#000" strokeWidth="1.300"><path d="M13 16.500h-1L9.500 20 6 16.500H1V1h19.500v9.500" /><path d="M19 11.500c2 3 1.500 7-1.500 8.500-2 .7-4 .2-5.500-1 3 0 6-3 7-7.500z" /></svg>
      <div className="h-full w-px shrink-0 bg-[#bdbdbd]" />
      <div className="w-[5px] shrink-0" />
    </footer>
  );
}

export default function App() {
  return (
    <div className={`flex h-[900px] w-[1600px] flex-col overflow-hidden bg-white ${UI}`}>
      <TitleBar />
      <MenuBar />
      <TabBar />
      <Toolbar />
      <div className="flex h-[693px] shrink-0 bg-[#999]">
        <div className="flex w-[22px] shrink-0 items-center justify-center bg-[#e9e9e9]">
          <svg width="8" height="13" viewBox="0 0 8 13"><path d="M0 0l8 6.500L0 13z" fill="#6e6e6e" /></svg>
        </div>
        <div className="w-[198px] shrink-0" />
        <DocPage />
        <div className="w-[199px] shrink-0" />
        <div className="flex w-[21px] shrink-0 flex-col items-center border-l border-white bg-[#f0f0f0] pb-[7px] pr-[1px] pt-[6px]">
          <Chev />
          <div className="mt-[48px] h-[21px] w-[19px] shrink-0 bg-[#cdcdcd]" />
          <div className="mt-auto flex"><Chev down /></div>
        </div>
        <div className="flex w-[22px] shrink-0 items-center justify-center border-l border-[#c4c4c4] bg-[#e9e9e9] pr-[2px]">
          <svg width="8" height="13" viewBox="0 0 8 13"><path d="M0 0l8 6.500L0 13z" fill="#6e6e6e" /></svg>
        </div>
        <SidePanel />
      </div>
      <Taskbar />
    </div>
  );
}
